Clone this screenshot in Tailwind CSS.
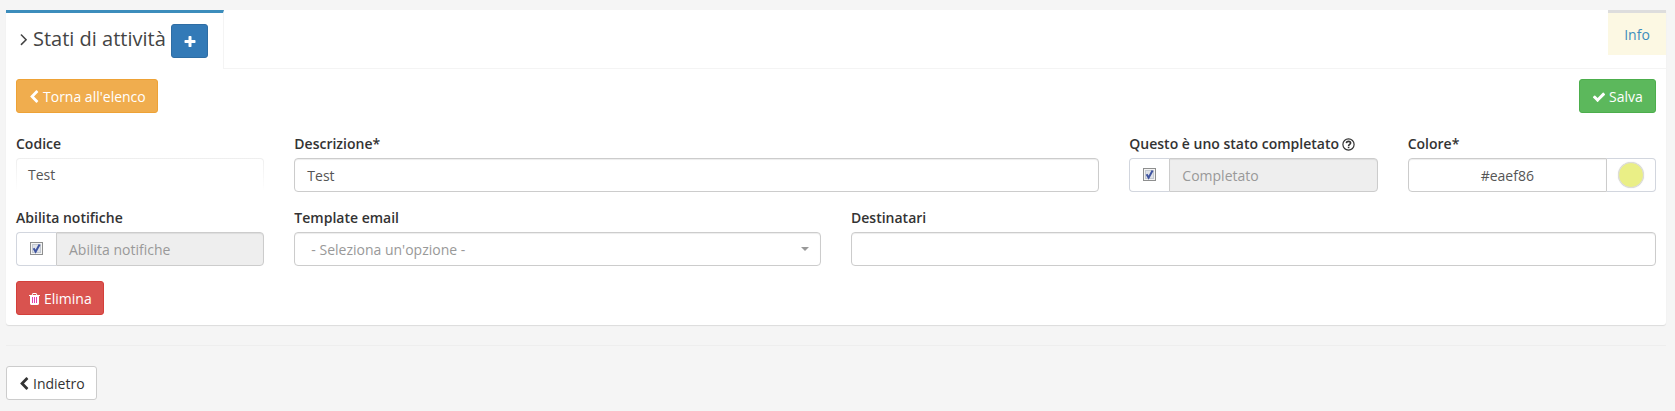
<!DOCTYPE html>
<html lang="it">
<head>
<meta charset="utf-8">
<title>Stati di attività</title>
<script src="https://cdn.jsdelivr.net/npm/@tailwindcss/browser@4"></script>
</head>
<body class="bg-[#f5f5f5] font-['Open_Sans','Noto_Sans',sans-serif] text-[14px] leading-5 text-[#333] px-[6px] pt-[10px] h-[411px] overflow-hidden">
<svg class="hidden">
  <symbol id="left" viewBox="0 0 1280 1792"><path d="M1171 301l-531 531 531 531q19 19 19 45t-19 45l-166 166q-19 19-45 19t-45-19l-742-742q-19-19-19-45t19-45l742-742q19-19 45-19t45 19l166 166q19 19 19 45t-19 45z"/></symbol>
  <symbol id="check" viewBox="0 0 1792 1792"><path d="M1671 566q0 40-28 68l-724 724-136 136q-28 28-68 28t-68-28l-136-136-362-362q-28-28-28-68t28-68l136-136q28-28 68-28t68 28l294 295 656-657q28-28 68-28t68 28l136 136q28 28 28 68z"/></symbol>
  <symbol id="box" viewBox="0 0 13 13">
    <rect x=".5" y=".5" width="12" height="12" fill="#f4f4f4" stroke="#8e8f8f"/>
    <rect x="2.5" y="2.5" width="8" height="8" fill="#dfe2e8" stroke="#c3c8d0"/>
    <path d="M3.6 6.2l2 3.6L9.6 2.6" fill="none" stroke="#3f54a0" stroke-width="2"/>
  </symbol>
</svg>
<main class="w-[1660px] h-[315px] bg-white rounded-b-[3px] shadow-[0_1px_1px_rgba(0,0,0,0.1)]">
  <header class="flex h-[59px]">
    <div class="w-[218px] border-t-[3px] border-t-[#3c8dbc] border-r border-r-[#f4f4f4] flex items-start pl-[14px] pt-[11px]">
      <svg class="w-[8px] h-5 mt-[5px] mr-[5px]" viewBox="540 0 717 1792" fill="#444"><path d="M1171 960q0 13-10 23l-466 466q-10 10-23 10t-23-10l-50-50q-10-10-10-23t10-23l393-393-393-393q-10-10-10-23t10-23l50-50q10-10 23-10t23 10l466 466q10 10 10 23z"/></svg>
      <h1 class="text-[20px] leading-[30px] text-[#444] w-[138px] whitespace-nowrap">Stati di attività</h1>
      <button class="w-[37px] h-[34px] rounded-[3px] border border-[#2e6da4] bg-[#337ab7] flex items-center justify-center pt-[2px] pl-px"><svg class="w-[14px] h-[14px]" viewBox="0 0 1792 1792" fill="#fff"><path d="M1600 736v192q0 40-28 68t-68 28h-416v416q0 40-28 68t-68 28h-192q-40 0-68-28t-28-68v-416h-416q-40 0-68-28t-28-68v-192q0-40 28-68t68-28h416v-416q0-40 28-68t68-28h192q40 0 68 28t28 68v416h416q40 0 68 28t28 68z"/></svg></button>
    </div>
    <div class="flex-1 border-b border-[#f4f4f4] flex justify-end">
      <a class="w-[58px] h-[45px] border-t-[3px] border-[#ddd] bg-[#fcf8e3] text-[#3c8dbc] text-center leading-[44px]">Info</a>
    </div>
  </header>
  <section class="px-[10px] pt-[10px]">
    <div class="flex justify-between mb-5">
      <button class="h-[34px] w-[142px] rounded-[3px] border border-[#eea236] bg-[#f0ad4e] text-white flex items-center pt-[2px] pl-[12px] gap-[4px] whitespace-nowrap"><svg class="w-[10px] h-[14px]" fill="currentColor"><use href="#left"/></svg>Torna all'elenco</button>
      <button class="h-[34px] w-[77px] rounded-[3px] border border-[#4cae4c] bg-[#5cb85c] text-white flex items-center pt-[2px] pl-[11.5px] gap-[3.5px]"><svg class="w-[14px] h-[14px]" fill="currentColor"><use href="#check"/></svg>Salva</button>
    </div>
    <div class="grid grid-cols-12 gap-x-[30px] gap-y-[15px]">
      <div class="col-span-2"><label class="block font-semibold leading-[22px] mb-[3px]">Codice</label>
        <div class="h-[34px] rounded-[4px] bg-gradient-to-b from-[#eee] to-white p-px"><div class="h-[33px] rounded-[3px] bg-white pl-[11px] leading-[31px] text-[#555]">Test</div></div></div>
      <div class="col-span-6"><label class="block font-semibold leading-[22px] mb-[3px]">Descrizione*</label>
        <div class="h-[34px] rounded-[4px] border border-[#ccc] shadow-[inset_0_1px_1px_rgba(0,0,0,0.075)] pl-[12px] leading-[33px] text-[#555]">Test</div></div>
      <div class="col-span-2"><label class="flex items-center font-semibold leading-[22px] mb-[3px] whitespace-nowrap">Questo è uno stato completato<svg class="w-[13px] h-[13px] ml-[3px]" viewBox="0 0 13 13" fill="none" stroke="#333"><circle cx="6.5" cy="6.5" r="5.6" stroke-width="1.2"/><path d="M4.3 5.1C4.5 3.9 5.4 3.4 6.5 3.4c1.2 0 2.1.7 2.1 1.7C8.6 6.4 6.6 6.4 6.6 8" stroke-width="1.6"/><path d="M6.6 8.7v1.5" stroke-width="1.6"/></svg></label>
        <div class="h-[34px] flex">
          <div class="w-[40px] rounded-l-[4px] border border-r-0 border-[#d2d6de] pl-[13px] pt-[9px]"><svg class="w-[13px] h-[13px]"><use href="#box"/></svg></div>
          <div class="flex-1 rounded-r-[4px] border border-[#ccc] bg-[#eee] shadow-[inset_0_1px_1px_rgba(0,0,0,0.075)] pl-[12px] leading-[33px] text-[#999]">Completato</div></div></div>
      <div class="col-span-2"><label class="block font-semibold leading-[22px] mb-[3px]">Colore*</label>
        <div class="h-[34px] flex">
          <div class="flex-1 rounded-l-[4px] border border-[#ccc] shadow-[inset_0_1px_1px_rgba(0,0,0,0.075)] text-center leading-[33px] text-[#555]">#eaef86</div>
          <div class="w-[49px] rounded-r-[4px] border border-l-0 border-[#d2d6de] pl-[11px] pt-[3px]"><div class="size-[26px] rounded-full border border-[#ddd] bg-[#eaef86] shadow-[0_0_1px_#ccc]"></div></div></div></div>
      <div class="col-span-2"><label class="block font-semibold leading-[22px] mb-[3px]">Abilita notifiche</label>
        <div class="h-[34px] flex">
          <div class="w-[40px] rounded-l-[4px] border border-r-0 border-[#d2d6de] pl-[13px] pt-[9px]"><svg class="w-[13px] h-[13px]"><use href="#box"/></svg></div>
          <div class="flex-1 rounded-r-[4px] border border-[#ccc] bg-[#eee] shadow-[inset_0_1px_1px_rgba(0,0,0,0.075)] pl-[12px] leading-[33px] text-[#999]">Abilita notifiche</div></div></div>
      <div class="col-span-4"><label class="block font-semibold leading-[22px] mb-[3px]">Template email</label>
        <div class="h-[34px] rounded-[4px] border border-[#ccc] shadow-[inset_0_1px_1px_rgba(0,0,0,0.075)] pl-[16px] pr-[11px] leading-[33px] text-[#999] flex items-center justify-between"><span>- Seleziona un'opzione -</span><svg class="w-[8px] h-[4px]" viewBox="0 0 8 4" fill="#999"><path d="M0 0h8L4 4z"/></svg></div></div>
      <div class="col-span-6"><label class="block font-semibold leading-[22px] mb-[3px]">Destinatari</label>
        <div class="h-[34px] rounded-[4px] border border-[#ccc] shadow-[inset_0_1px_1px_rgba(0,0,0,0.075)]"></div></div>
    </div>
    <button class="mt-[15px] h-[34px] w-[88px] rounded-[3px] border border-[#d43f3a] bg-[#d9534f] text-white flex items-center pt-[2px] pl-[12px] gap-[4px]"><svg class="w-[11px] h-[14px]" viewBox="192 0 1408 1792"><path fill="#fff" d="M672 384h448l-48-117q-7-9-17-11h-317q-10 2-17 11zm928 32v64q0 14-9 23t-23 9h-96v948q0 83-47 143.500t-113 60.500h-832q-66 0-113-58.500t-47-141.500v-952h-96q-14 0-23-9t-9-23v-64q0-14 9-23t23-9h309l70-167q15-37 54-63t79-26h320q40 0 79 26t54 63l70 167h309q14 0 23 9t9 23z"/><path fill="#d9534f" d="M672 384h448l-60-128H732z"/><path fill="#e53fae" d="M576 640h128v768H576zM832 640h128v768H832zM1088 640h128v768h-128z"/></svg>Elimina</button>
  </section>
</main>
<hr class="w-[1660px] mt-5 mb-5 border-0 border-t border-[#eee]">
<button class="h-[34px] w-[91px] rounded-[3px] border border-[#ccc] bg-white flex items-center pt-[2px] pl-[12px] gap-[4px]"><svg class="w-[10px] h-[14px]" fill="currentColor"><use href="#left"/></svg>Indietro</button>
</body>
</html>
